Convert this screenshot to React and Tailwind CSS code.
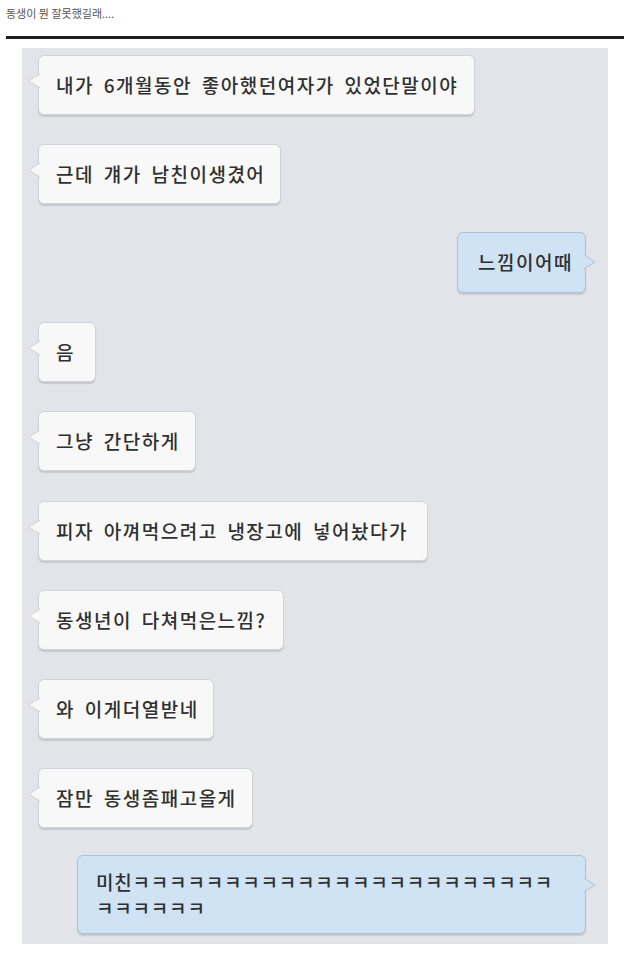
import React from 'react';

const messages = [
  { id: 1, side: 'left', text: '내가 6개월동안 좋아했던여자가 있었단말이야', w: 'w-[437px]', mt: 'mt-[7px]' },
  { id: 2, side: 'left', text: '근데 걔가 남친이생겼어', w: 'w-[243px]', mt: 'mt-[29px]' },
  { id: 3, side: 'right', text: '느낌이어때', w: 'w-[129px]', mt: 'mt-[28px]' },
  { id: 4, side: 'left', text: '음', w: 'w-[58px]', mt: 'mt-[29px]' },
  { id: 5, side: 'left', text: '그냥 간단하게', w: 'w-[158px]', mt: 'mt-[29px]' },
  { id: 6, side: 'left', text: '피자 아껴먹으려고 냉장고에 넣어놨다가', w: 'w-[390px]', mt: 'mt-[30px]' },
  { id: 7, side: 'left', text: '동생년이 다쳐먹은느낌?', w: 'w-[246px]', mt: 'mt-[29px]' },
  { id: 8, side: 'left', text: '와 이게더열받네', w: 'w-[176px]', mt: 'mt-[29px]' },
  { id: 9, side: 'left', text: '잠만 동생좀패고올게', w: 'w-[215px]', mt: 'mt-[29px]' },
];

function LeftTail() {
  return (
    <svg className="absolute left-[-11px] top-[17px]" width="12" height="16" viewBox="0 0 12 16">
      <path d="M12 1 L1 8 L12 15" fill="#f8f8f8" stroke="#d2d3d8" strokeWidth="1" />
    </svg>
  );
}

function RightTail() {
  return (
    <svg className="absolute right-[-11px] top-[21px]" width="12" height="16" viewBox="0 0 12 16">
      <path d="M0 1 L11 8 L0 15" fill="#cfe3f5" stroke="#a9c2d9" strokeWidth="1" />
    </svg>
  );
}

const textCls = 'text-[19px] font-medium tracking-[1.5px] [word-spacing:4px] text-[#303030] whitespace-nowrap';

function Bubble({ m }) {
  if (m.side === 'right') {
    return (
      <div className={`${m.mt} self-end relative ${m.w} h-[61px] flex items-center pl-[20px] rounded-[6px] bg-[#cfe3f5] border border-[#a9c2d9] shadow-[0_2px_1px_rgba(0,0,0,0.12)]`}>
        <span className={textCls}>{m.text}</span>
        <RightTail />
      </div>
    );
  }
  return (
    <div className={`${m.mt} relative ${m.w} h-[60px] flex items-center pl-[17px] rounded-[6px] bg-[#f8f8f8] border border-[#d2d3d8] shadow-[0_2px_1px_rgba(0,0,0,0.12)]`}>
      <span className={textCls}>{m.text}</span>
      <LeftTail />
    </div>
  );
}

export default function App() {
  return (
    <div className="w-[643px] h-[960px] bg-white overflow-hidden" style={{ fontFamily: '"Noto Sans CJK KR", "Noto Sans", sans-serif' }}>
      <div className="pl-[6px] pt-[5px] h-[36px] text-[11px] text-[#555]">동생이 뭔 잘못했길래....</div>
      <div className="ml-[6px] w-[618px] h-[3px] bg-[#1c1c1c]" />
      <div className="ml-[22px] mt-[9px] w-[586px] h-[896px] bg-[#e3e4e9] pl-[16px] pr-[22px] flex flex-col">
        {messages.map((m) => (
          <Bubble key={m.id} m={m} />
        ))}
        <div className="mt-[27px] self-end relative w-[509px] h-[79px] pl-[18px] pt-[13px] rounded-[6px] bg-[#cfe3f5] border border-[#a9c2d9] shadow-[0_2px_1px_rgba(0,0,0,0.12)]">
          <p className="text-[19px] font-medium tracking-[0.8px] leading-[26px] text-[#303030]">
            미친ㅋㅋㅋㅋㅋㅋㅋㅋㅋㅋㅋㅋㅋㅋㅋㅋㅋㅋㅋㅋㅋㅋㅋ<br />ㅋㅋㅋㅋㅋㅋ
          </p>
          <RightTail />
        </div>
      </div>
    </div>
  );
}
